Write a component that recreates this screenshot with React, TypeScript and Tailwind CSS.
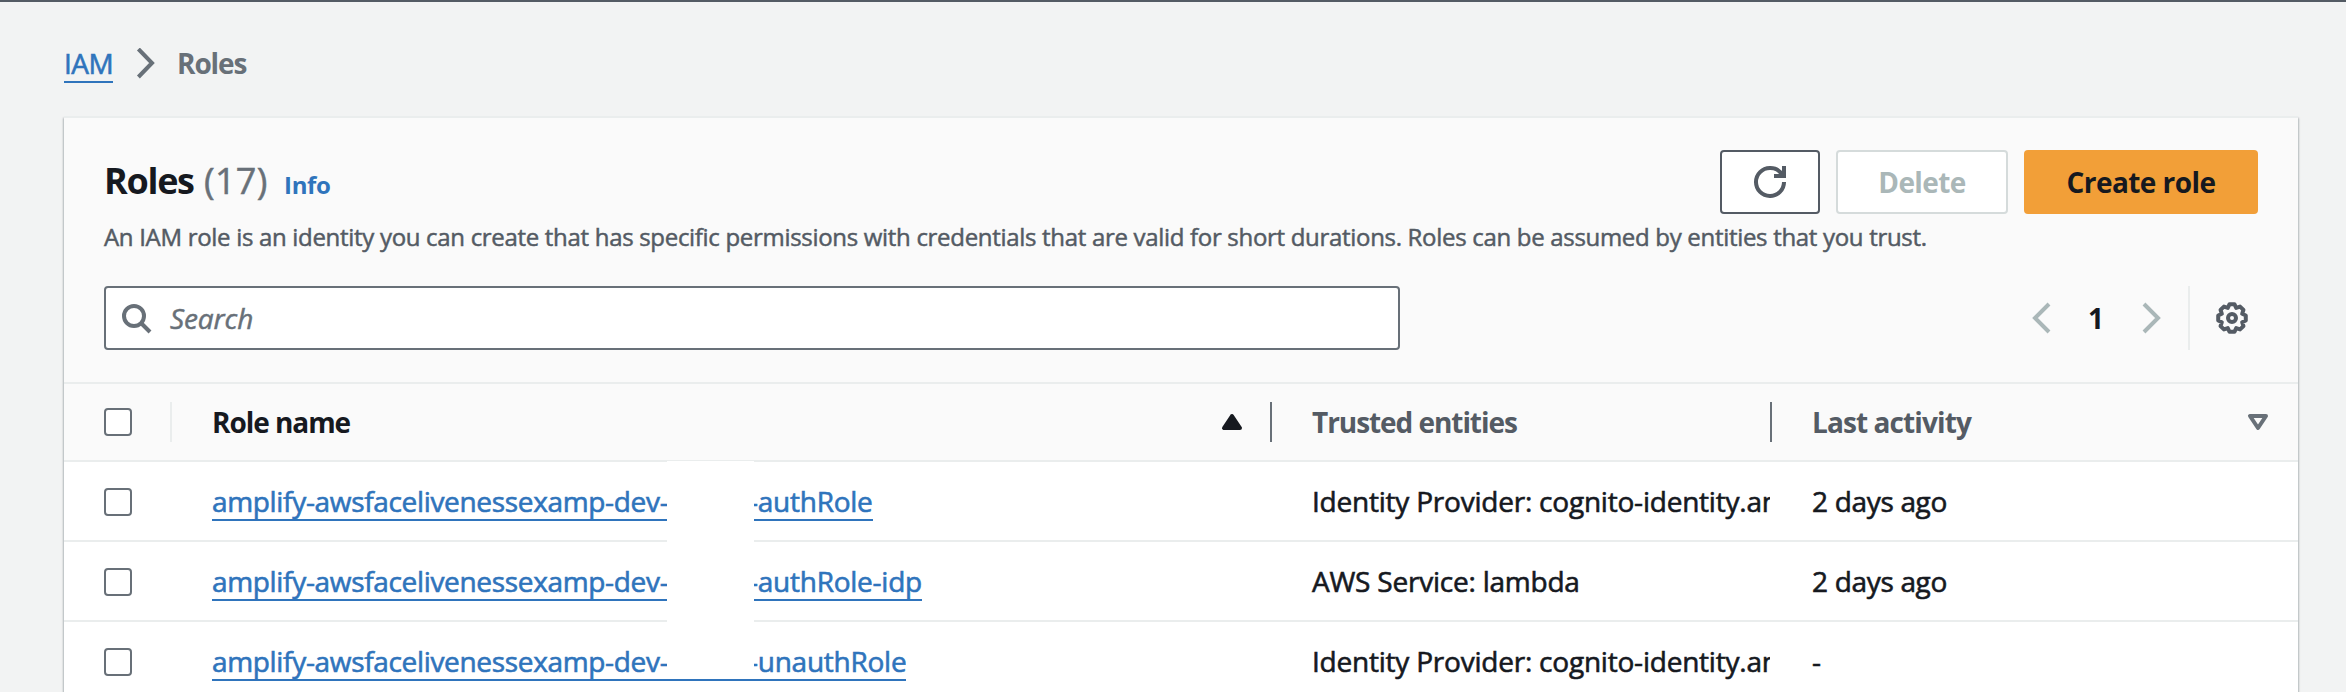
import type { ReactNode } from "react";

type Role = { suffix: string; entity: string; activity: string };

const roles: Role[] = [
  { suffix: "-authRole", entity: "Identity Provider: cognito-identity.am", activity: "2 days ago" },
  { suffix: "-authRole-idp", entity: "AWS Service: lambda", activity: "2 days ago" },
  { suffix: "-unauthRole", entity: "Identity Provider: cognito-identity.am", activity: "-" },
];

const grid = "grid grid-cols-[106px_1100px_500px_528px]";

function Icon({ children, className = "" }: { children: ReactNode; className?: string }) {
  return (
    <svg viewBox="0 0 16 16" fill="none" stroke="currentColor" strokeWidth="2" className={`size-8 shrink-0 ${className}`}>
      {children}
    </svg>
  );
}

function Checkbox() {
  return <span className="block size-7 rounded-[4px] border-2 border-[#687078] bg-white" />;
}

function HeaderCell({ label, labelClass, dark, icon }: { label: string; labelClass: string; dark?: boolean; icon?: ReactNode }) {
  return (
    <div className="flex h-[76px] items-center">
      <div className={`flex h-10 w-full items-center justify-between border-l-2 pl-10 pr-[38px] ${dark ? "border-[#687078]" : "border-[#eaeded]"}`}>
        <span className={`font-bold leading-9 ${labelClass}`}>{label}</span>
        {icon}
      </div>
    </div>
  );
}

export default function App() {
  return (
    <div className="flex h-[692px] w-[2346px] flex-col overflow-hidden border-t-2 border-[#545b64] bg-[#f2f3f3] font-['Open_Sans','Noto_Sans',sans-serif] text-[28px] whitespace-nowrap text-[#16191f]">
      <nav className="flex h-[114px] shrink-0 items-start pl-16 pt-[43px] leading-9">
        <a className="h-[38px] w-[49px] border-b-2 border-[#2f74bc] tracking-[-0.57px] text-[#2f74bc] [-webkit-text-stroke:0.6px]">IAM</a>
        <Icon className="ml-5 mt-[3px] text-[#687078]">
          <path d="M2.7 1 9.5 8 2.7 15" transform="translate(0 -0.5)" />
        </Icon>
        <span className="ml-3 font-bold tracking-[-1.1px] text-[#687078]">Roles</span>
      </nav>

      <main className="relative ml-16 w-[2234px] flex-1 border-t-2 border-[#eaeded] bg-white shadow-[0_2px_2px_0_rgba(0,28,36,0.3),1px_2px_2px_0_rgba(0,28,36,0.15),-1px_2px_2px_0_rgba(0,28,36,0.15)]">
        <header className="h-[266px] border-b-2 border-[#eaeded] bg-[#fafafa] px-10 pt-8">
          <div className="flex h-16 items-start justify-between">
            <h1 className="flex items-baseline pt-[7px] text-[36px] leading-[48px]">
              <span className="w-[100px] font-bold tracking-[-1.3px]">Roles</span>
              <span className="w-[80px] tracking-[0.3px] text-[#687078] [-webkit-text-stroke:0.5px]">(17)</span>
              <a className="text-[24px] font-bold tracking-[-0.3px] text-[#2f74bc]">Info</a>
            </h1>
            <div className="flex gap-4 font-bold">
              <button className="flex h-16 w-[100px] items-center justify-center rounded-[4px] border-2 border-[#545b64] bg-white text-[#545b64]">
                <Icon>
                  <path d="M10 5h5V0M15 8a6.957 6.957 0 0 1-7 7 6.957 6.957 0 0 1-7-7 6.957 6.957 0 0 1 7-7 6.87 6.87 0 0 1 6.3 4" />
                </Icon>
              </button>
              <button className="h-16 w-[172px] rounded-[4px] border-2 border-[#d5dbdb] bg-white leading-9 tracking-[-0.6px] text-[#aab7b8]">Delete</button>
              <button className="h-16 w-[234px] rounded-[4px] bg-[#f29f38] leading-9 tracking-[-0.55px]">Create role</button>
            </div>
          </div>
          <p className="mt-[5px] text-[24px] leading-9 tracking-[-0.308px] text-[#545b64] [-webkit-text-stroke:0.5px]">
            An IAM role is an identity you can create that has specific permissions with credentials that are valid for short durations. Roles can be assumed by entities that you trust.
          </p>
          <div className="mt-[31px] flex h-16 items-center justify-between">
            <div className="flex h-16 w-[1296px] items-center rounded-[4px] border-2 border-[#687078] bg-white pl-[14px] text-[#687078]">
              <Icon>
                <circle cx="7" cy="7" r="5" />
                <path d="m15 15-4.5-4.5" />
              </Icon>
              <span className="ml-[18px] italic leading-9 tracking-[-0.1px] [-webkit-text-stroke:0.5px]">Search</span>
            </div>
            <div className="flex items-center pr-[10px]">
              <Icon className="text-[#aab7b8]">
                <path d="M12 1 5 8l7 7" />
              </Icon>
              <span className="w-[79px] pl-[31px] font-bold leading-9">1</span>
              <Icon className="text-[#aab7b8]">
                <path d="m4 1 7 7-7 7" />
              </Icon>
              <span className="ml-5 mr-[26px] h-16 w-0.5 bg-[#eaeded]" />
              <Icon className="text-[#545b64]">
                <path
                  d="M6.78 1.11H9.22L10.1 2.92 12.02 2.27 13.73 3.98 13.08 5.9 14.89 6.78V9.22L13.08 10.1 13.73 12.02 12.02 13.73 10.1 13.08 9.22 14.89H6.78L5.9 13.08 3.98 13.73 2.27 12.02 2.92 10.1 1.11 9.22V6.78L2.92 5.9 2.27 3.98 3.98 2.27 5.9 2.92Z"
                  strokeLinejoin="round"
                />
                <circle cx="8" cy="8" r="2" />
              </Icon>
            </div>
          </div>
        </header>

        <div className={`${grid} border-b-2 border-[#eaeded] bg-[#fafafa]`}>
          <div className="flex items-center pl-10"><Checkbox /></div>
          <HeaderCell
            label="Role name"
            labelClass="tracking-[-1.05px]"
            icon={<Icon className="-mr-[16px]"><path d="M8 5 4 11h8z" fill="currentColor" strokeLinejoin="round" /></Icon>}
          />
          <HeaderCell label="Trusted entities" labelClass="tracking-[-1.06px] text-[#545b64]" dark />
          <HeaderCell
            label="Last activity"
            labelClass="tracking-[-0.9px] text-[#545b64]"
            dark
            icon={<Icon className="-mr-[14px] text-[#687078]"><path d="M4 5h8l-4 6z" strokeLinejoin="round" /></Icon>}
          />
        </div>

        {roles.map((role) => (
          <div key={role.suffix} className={`${grid} h-20 border-b-2 border-[#eaeded] pt-[21px] leading-9 [-webkit-text-stroke:0.6px]`}>
            <div className="pl-10 pt-[5px]"><Checkbox /></div>
            <div className="pl-[42px]">
              <a className="inline-flex h-[38px] border-b-2 border-[#2f74bc] text-[#2f74bc]">
                <span className="mr-[87px] w-[455px] overflow-hidden tracking-[-0.33px]">amplify-awsfacelivenessexamp-dev-</span>
                <span className="overflow-hidden -indent-[5px] tracking-[-0.25px]">{role.suffix}</span>
              </a>
            </div>
            <div className="overflow-hidden pl-[42px] tracking-[-0.22px]">{role.entity}</div>
            <div className="pl-[42px] tracking-[-0.32px]">{role.activity}</div>
          </div>
        ))}
        <div className="absolute left-[603px] top-[343px] h-[218px] w-[87px] bg-white" />
      </main>
    </div>
  );
}
